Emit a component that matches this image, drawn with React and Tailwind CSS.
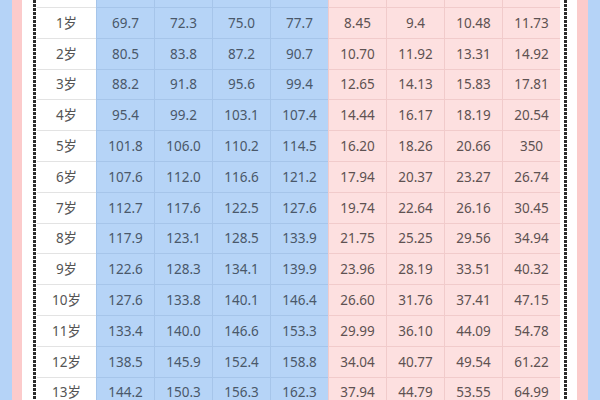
import React from 'react';

const rows = [
  ['', '62.0', '64.6', '67.3', '70.1', '5.77', '6.48', '7.25', '8.10'],
  ['1岁', '69.7', '72.3', '75.0', '77.7', '8.45', '9.4', '10.48', '11.73'],
  ['2岁', '80.5', '83.8', '87.2', '90.7', '10.70', '11.92', '13.31', '14.92'],
  ['3岁', '88.2', '91.8', '95.6', '99.4', '12.65', '14.13', '15.83', '17.81'],
  ['4岁', '95.4', '99.2', '103.1', '107.4', '14.44', '16.17', '18.19', '20.54'],
  ['5岁', '101.8', '106.0', '110.2', '114.5', '16.20', '18.26', '20.66', '350'],
  ['6岁', '107.6', '112.0', '116.6', '121.2', '17.94', '20.37', '23.27', '26.74'],
  ['7岁', '112.7', '117.6', '122.5', '127.6', '19.74', '22.64', '26.16', '30.45'],
  ['8岁', '117.9', '123.1', '128.5', '133.9', '21.75', '25.25', '29.56', '34.94'],
  ['9岁', '122.6', '128.3', '134.1', '139.9', '23.96', '28.19', '33.51', '40.32'],
  ['10岁', '127.6', '133.8', '140.1', '146.4', '26.60', '31.76', '37.41', '47.15'],
  ['11岁', '133.4', '140.0', '146.6', '153.3', '29.99', '36.10', '44.09', '54.78'],
  ['12岁', '138.5', '145.9', '152.4', '158.8', '34.04', '40.77', '49.54', '61.22'],
  ['13岁', '144.2', '150.3', '156.3', '162.3', '37.94', '44.79', '53.55', '64.99'],
];

const Dotted = () => (
  <div className="w-[3px] shrink-0 bg-[repeating-linear-gradient(to_bottom,#2b2b2b_0_3px,transparent_3px_4px)]" />
);

const Cell = ({ value, col }) => {
  if (col === 0) {
    return (
      <div className="h-[30.8px] flex items-center justify-center bg-white border-b border-[#e3e3e3] text-[#555]">
        {value}
      </div>
    );
  }
  if (col <= 4) {
    return (
      <div className="h-[30.8px] flex items-center justify-center bg-[#b6d4f7] border-b border-l border-[#a6c5ea] text-[#4a586a]">
        {value}
      </div>
    );
  }
  return (
    <div className="h-[30.8px] flex items-center justify-center bg-[#fde0e0] border-b border-l border-[#f1cbcb] text-[#5e5252]">
      {value}
    </div>
  );
};

export default function App() {
  return (
    <div className="w-[600px] h-[400px] overflow-hidden flex bg-white font-['Noto_Sans','Noto_Sans_CJK_SC',sans-serif] text-[13.5px]">
      <div className="w-[12px] shrink-0 bg-[#b5d3f7]" />
      <div className="w-[10px] shrink-0 bg-[#fccbcb]" />
      <div className="w-[11px] shrink-0 bg-white" />
      <Dotted />
      <div className="w-[1px] shrink-0" />
      <div className="w-[523px] shrink-0">
        <div className="grid grid-cols-[59px_repeat(8,58px)] -mt-[22.8px]">
          {rows.map((row, r) =>
            row.map((v, c) => <Cell key={`${r}-${c}`} value={v} col={c} />)
          )}
        </div>
      </div>
      <div className="w-[4px] shrink-0" />
      <Dotted />
      <div className="w-[10px] shrink-0 bg-white" />
      <div className="w-[11px] shrink-0 bg-[#fccbcb]" />
      <div className="w-[12px] shrink-0 bg-[#b5d3f7]" />
    </div>
  );
}
